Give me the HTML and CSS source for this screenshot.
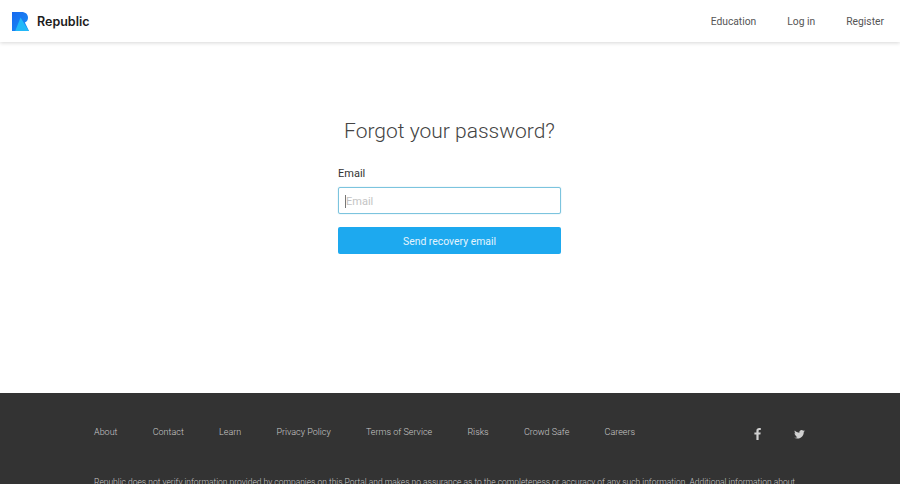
FILE: index.html
```html
<!DOCTYPE html>
<html lang="en">
<head>
    <meta charset="UTF-8">
    <meta name="viewport" content="width=device-width, initial-scale=1.0">
    <title>Republic</title>
    <link rel="stylesheet" href="styles.css">
</head>
<body>
    <header>
        <a class="logo" href="#">
            <svg width="17" height="19" viewBox="0 0 17 19">
                <defs>
                    <linearGradient id="logo-blue" x1="0" y1="0" x2="1" y2="1">
                        <stop offset="0" stop-color="#1769ef"/>
                        <stop offset="1" stop-color="#1a8ff5"/>
                    </linearGradient>
                </defs>
                <path d="M0 0H9.5C13.6 0 16 2.4 16 5.7C16 8 14.8 9.7 12.9 10.6L17 19H0Z" fill="url(#logo-blue)"/>
                <path d="M8.6 5.5L14 14.5L17 19H3.2Z" fill="#22b8f8"/>
            </svg>
            <span>Republic</span>
        </a>
        <nav>
            <a href="#">Education</a>
            <a href="#">Log in</a>
            <a href="#">Register</a>
        </nav>
    </header>
    <main>
        <h1>Forgot your password?</h1>
        <form class="recovery-form">
            <label for="email">Email</label>
            <div class="email-input" id="email"><i class="caret"></i>Email</div>
            <button type="button">Send recovery email</button>
        </form>
    </main>
    <footer>
        <div class="footer-top">
            <ul class="footer-links">
                <li><a href="#">About</a></li>
                <li><a href="#">Contact</a></li>
                <li><a href="#">Learn</a></li>
                <li><a href="#">Privacy Policy</a></li>
                <li><a href="#">Terms of Service</a></li>
                <li><a href="#">Risks</a></li>
                <li><a href="#">Crowd Safe</a></li>
                <li><a href="#">Careers</a></li>
            </ul>
            <div class="social">
                <svg width="7" height="12" viewBox="0 0 7 12"><path d="M4.6 12V6.6H6.4L6.7 4.4H4.6V3.1C4.6 2.5 4.8 2.1 5.6 2.1H6.8V.1C6.5.1 5.9 0 5.2 0 3.600 0 2.400 1 2.400 2.800V4.400H.4V6.600H2.400V12Z" fill="#d0d0d0"/></svg>
                <svg width="11" height="9" viewBox="0 0 24 20"><path d="M24 2.400c-.9.4-1.800.7-2.800.8 1-.6 1.800-1.600 2.200-2.700-1 .6-2 1-3.100 1.200C19.300.7 18 0 16.600 0c-2.700 0-4.900 2.200-4.900 4.900 0 .4 0 .8.1 1.100C7.700 5.800 4.100 3.900 1.700.9c-.4.700-.7 1.600-.7 2.500 0 1.700.9 3.200 2.200 4.100-.8 0-1.600-.2-2.200-.6v.1c0 2.400 1.700 4.400 3.900 4.800-.4.100-.8.200-1.300.200-.3 0-.6 0-.9-.1.600 2 2.400 3.400 4.600 3.400-1.700 1.300-3.800 2.100-6.100 2.100-.4 0-.8 0-1.200-.1C2.200 18.300 4.800 19.100 7.500 19.100c9.100 0 14-7.500 14-14v-.6c1-.7 1.800-1.500 2.500-2.100z" fill="#d0d0d0"/></svg>
            </div>
        </div>
        <p class="disclaimer">Republic does not verify information provided by companies on this Portal and makes no assurance as to the completeness or accuracy of any such information. Additional information about</p>
    </footer>
</body>
</html>
```

FILE: styles.css
```css
html, body { height: 100%; }
body { font-family: Roboto, "Liberation Sans", sans-serif; margin: 0; padding: 0; background-color: #fff; color: #333; display: flex; flex-direction: column; height: 484px; overflow: hidden; }
a { text-decoration: none; color: inherit; }

header { display: flex; justify-content: space-between; align-items: center; height: 42px; padding: 0 16px 0 12px; flex-shrink: 0; background-color: #fff; box-shadow: 0 1px 4px rgba(0, 0, 0, 0.16); position: relative; }
.logo { display: flex; align-items: center; gap: 8px; font-family: Inter, sans-serif; font-size: 12.5px; font-weight: 600; color: #1c1c1c; }
.logo svg { display: block; }
header nav { display: flex; gap: 31px; font-size: 10.3px; color: #555; }

main { height: 351px; flex-shrink: 0; display: flex; flex-direction: column; align-items: center; padding-right: 1px; }
h1 { margin: 75px 0 0; font-size: 21px; line-height: 28px; font-weight: 300; color: #444; }

.recovery-form { width: 223px; margin-top: 22px; display: flex; flex-direction: column; }
.recovery-form label { font-size: 11px; line-height: 14px; font-weight: 400; color: #333; }
.email-input { box-sizing: border-box; height: 27px; margin-top: 6px; padding: 1px 0 0 6px; display: flex; align-items: center; border: 1px solid #7cc4de; border-radius: 2px; box-shadow: 0 0 1px #7cc4de; font-size: 11px; color: #c4c4c4; }
.caret { width: 1px; height: 13px; background-color: #777; }
.recovery-form button { height: 27px; margin-top: 13px; padding: 1px 0 0; border: none; border-radius: 2px; background-color: #1da9ef; color: #e4f4fd; font-family: inherit; font-size: 10.4px; cursor: pointer; }

footer { flex: 1; background-color: #333; padding: 0 94px; color: #c8c8c8; font-size: 9px; overflow: hidden; }
.footer-top { display: flex; justify-content: space-between; align-items: center; padding-top: 32px; height: 14px; }
.footer-links { display: flex; gap: 35.2px; list-style: none; margin: 0; padding: 0; font-weight: 300; }
.social { display: flex; align-items: center; gap: 33px; margin-right: 1px; margin-top: 4px; }
.social svg { display: block; }
.disclaimer { margin: 36px 0 0; font-size: 8.47px; line-height: 14px; white-space: nowrap; font-weight: 300; }
```
